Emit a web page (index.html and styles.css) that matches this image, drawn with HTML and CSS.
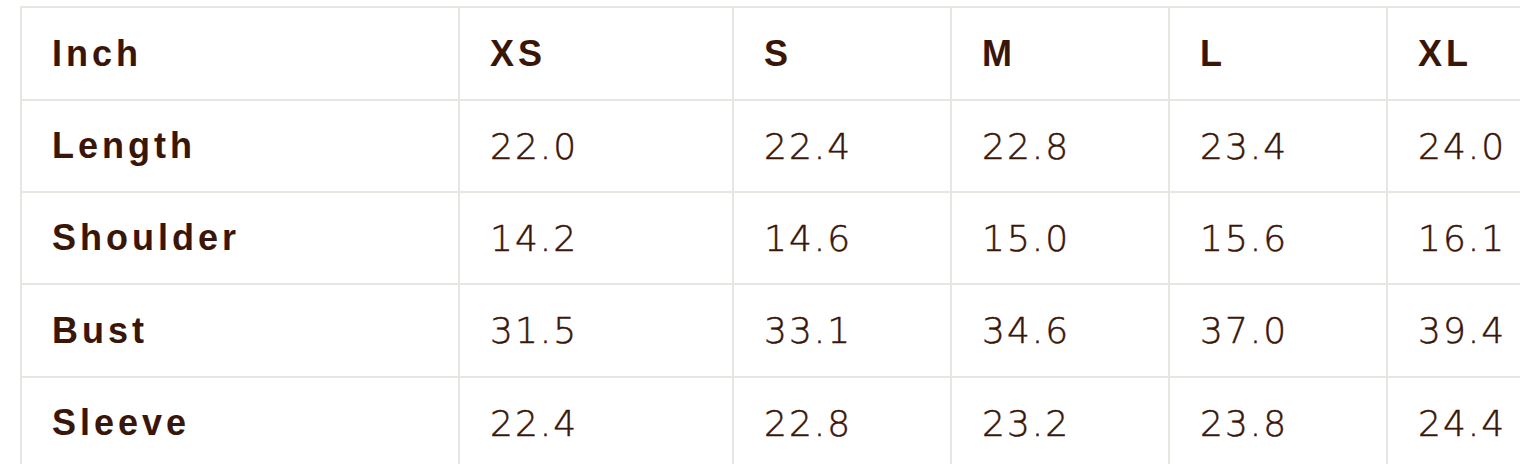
FILE: index.html
```html
<!DOCTYPE html>
<html lang="en">
<head>
<meta charset="utf-8">
<title>Size chart</title>
<link rel="stylesheet" href="styles.css">
</head>
<body>
<div class="chart-wrap">
  <table class="size-chart">
    <thead>
      <tr class="row-tall">
        <th class="label">Inch</th>
        <th>XS</th>
        <th>S</th>
        <th>M</th>
        <th>L</th>
        <th>XL</th>
      </tr>
    </thead>
    <tbody>
      <tr><th class="label">Length</th><td>22.0</td><td>22.4</td><td>22.8</td><td>23.4</td><td>24.0</td></tr>
      <tr><th class="label">Shoulder</th><td>14.2</td><td>14.6</td><td>15.0</td><td>15.6</td><td>16.1</td></tr>
      <tr class="row-tall"><th class="label">Bust</th><td>31.5</td><td>33.1</td><td>34.6</td><td>37.0</td><td>39.4</td></tr>
      <tr><th class="label">Sleeve</th><td>22.4</td><td>22.8</td><td>23.2</td><td>23.8</td><td>24.4</td></tr>
    </tbody>
  </table>
</div>
</body>
</html>
```
FILE: styles.css
```css
html, body {
  margin: 0;
  padding: 0;
  background: #ffffff;
}

body {
  overflow: hidden;
  font-family: "Liberation Sans", Arial, sans-serif;
  color: #3a1609;
}

.chart-wrap {
  padding: 6px 0 0 20px;
  width: 1500px;
  overflow: hidden;
}

.size-chart {
  border-collapse: collapse;
  table-layout: fixed;
  width: 1586px;
}

.size-chart th,
.size-chart td {
  border: 2px solid #e8e6e0;
  height: 92px;
  padding: 0 0 0 30px;
  box-sizing: border-box;
  text-align: left;
  vertical-align: middle;
  font-size: 36px;
  white-space: nowrap;
}

.size-chart .row-tall th,
.size-chart .row-tall td {
  height: 93px;
}

.size-chart th {
  font-weight: 700;
  letter-spacing: 4px;
}

.size-chart td {
  font-family: "DejaVu Sans", "Liberation Sans", sans-serif;
  font-weight: 200;
  letter-spacing: 2px;
  -webkit-text-stroke: 0.5px #3a1609;
}

.size-chart th:nth-child(1) { width: 438px; }
.size-chart th:nth-child(2) { width: 274px; }
.size-chart th:nth-child(3),
.size-chart th:nth-child(4),
.size-chart th:nth-child(5),
.size-chart th:nth-child(6) { width: 218px; }
```
